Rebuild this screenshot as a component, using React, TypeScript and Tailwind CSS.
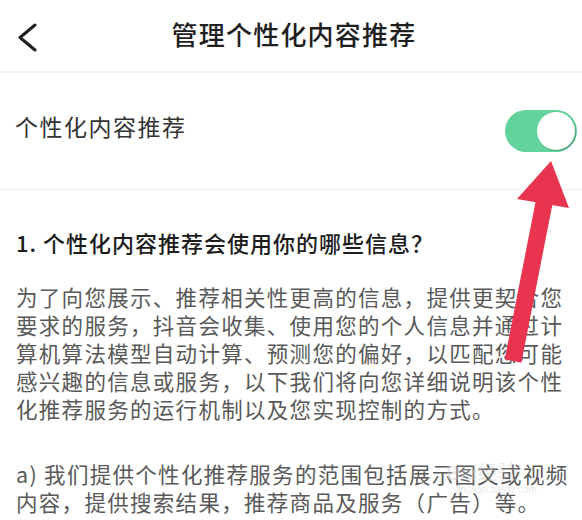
import React from "react";

const cjk = { fontFamily: '"Noto Sans CJK SC", "Noto Sans", sans-serif' };

const introLines = [
  "为了向您展示、推荐相关性更高的信息，提供更契合您",
  "要求的服务，抖音会收集、使用您的个人信息并通过计",
  "算机算法模型自动计算、预测您的偏好，以匹配您可能",
  "感兴趣的信息或服务，以下我们将向您详细说明该个性",
  "化推荐服务的运行机制以及您实现控制的方式。",
];

const scopeLines = [
  "a) 我们提供个性化推荐服务的范围包括展示图文或视频",
  "内容，提供搜索结果，推荐商品及服务（广告）等。",
];

function Toggle() {
  return (
    <div className="w-[72px] h-[42px] rounded-full bg-[#62d39b] flex items-center justify-end pr-[2px]">
      <div className="w-[38px] h-[38px] rounded-full bg-white shadow-[1px_1px_1px_rgba(0,0,0,0.25)]" />
    </div>
  );
}

export default function App() {
  return (
    <div className="relative w-[582px] h-[520px] overflow-hidden bg-white" style={cjk}>
      {/* header */}
      <div className="relative h-[71px] flex items-center justify-center">
        <svg className="absolute left-[16px] top-[23px]" width="22" height="30" viewBox="0 0 22 30">
          <polyline points="19,2 4,14.5 19,27" fill="none" stroke="#1f1f1f" strokeWidth="3" strokeLinecap="round" strokeLinejoin="round" />
        </svg>
        <h1 className="-mt-[4px] text-[26px] leading-[30px] tracking-[1.2px] font-medium text-[#1f1f1f] pl-[6px]">
          管理个性化内容推荐
        </h1>
      </div>
      <div className="h-[2px] bg-[#f1f1f1]" />

      {/* switch row */}
      <div className="h-[116px] flex items-center justify-between pl-[15px] pr-[5px]">
        <span className="text-[23px] leading-[30px] tracking-[1.5px] text-[#333] -mt-[10px]">个性化内容推荐</span>
        <Toggle />
      </div>
      <div className="h-[1px] bg-[#ececec]" />

      {/* body */}
      <div className="px-[16px] pt-[37px]">
        <h2 className="text-[22px] leading-[30px] tracking-[1px] font-medium text-[#1c1c1c]">
          1. 个性化内容推荐会使用你的哪些信息？
        </h2>
        <p className="mt-[26px] text-[21.5px] leading-[28px] tracking-[1.3px] text-[#595959]">
          {introLines.map((l) => (
            <span key={l} className="block whitespace-nowrap">{l}</span>
          ))}
        </p>
        <p className="mt-[37px] text-[21.5px] leading-[28px] tracking-[1.3px] text-[#595959]">
          {scopeLines.map((l) => (
            <span key={l} className="block whitespace-nowrap">{l}</span>
          ))}
        </p>
      </div>

      {/* watermark */}
      <div className="absolute left-[446px] top-[462px] text-[rgba(200,200,200,0.4)] pointer-events-none" style={{ fontFamily: '"Liberation Sans", "Noto Sans CJK SC", sans-serif' }}>
        <div className="text-[20px] leading-[22px] font-bold">Bai<span className="font-normal">经验</span></div>
        <div className="text-[10px] leading-[12px] ml-[10px]">jingyan.baidu.com</div>
      </div>

      {/* red arrow annotation */}
      <svg className="absolute left-0 top-0 pointer-events-none" width="582" height="520" viewBox="0 0 582 520">
        <line x1="545" y1="198" x2="513" y2="361" stroke="#e8344e" strokeWidth="17" />
        <polygon points="551,161 517,199 569,208" fill="#e8344e" />
      </svg>
    </div>
  );
}
